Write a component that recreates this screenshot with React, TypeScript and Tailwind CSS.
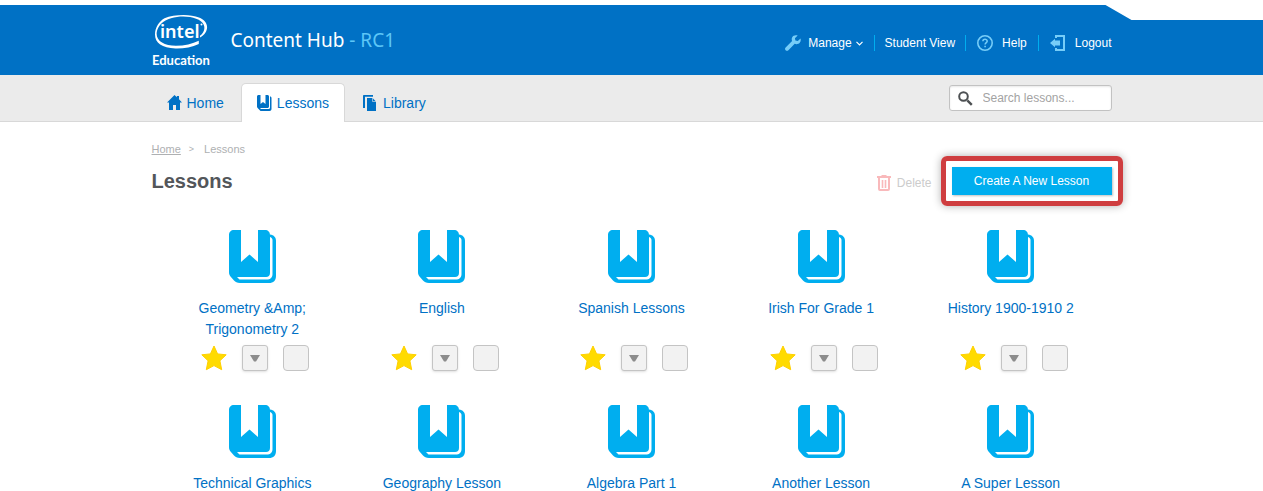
import React from 'react';

const lessons = [
  'Geometry &Amp; Trigonometry 2',
  'English',
  'Spanish Lessons',
  'Irish For Grade 1',
  'History 1900-1910 2',
  'Technical Graphics',
  'Geography Lesson',
  'Algebra Part 1',
  'Another Lesson',
  'A Super Lesson',
];

function IntelLogo() {
  return (
    <svg width="62" height="54" viewBox="0 0 62 54" fill="#fff" aria-label="Intel Education">
      <path d="M12.5 4.2C22 .4 38 -.4 47 3.600C54 6.500 57.300 12 53.500 18.500C52.300 20.500 50.300 22.300 48 23.600V21.800C51.500 19 53.500 14.800 51.700 10.800C48.500 3.200 32 .5 19 4.200C11 6.600 5.500 12 4.700 18.500C3.700 27 12 31.800 24 31.800C32.500 31.800 40.500 29.800 46.800 26.700V30C40 33.200 31.500 34.700 23.500 34.500C10 34.100 3 28.800 3 20.500C3 13.500 7 7.500 12.500 4.200Z" />
      <text x="8" y="24" fontSize="18" fontWeight="600" fontFamily="'Noto Sans', sans-serif">intel</text>
      <circle cx="49.500" cy="10.500" r="1" />
      <text x="0" y="51" fontSize="13" fontWeight="700" fontFamily="Lato, sans-serif">Education</text>
    </svg>
  );
}

function WrenchIcon() {
  return (
    <svg width="16" height="16" viewBox="0 0 16 16" fill="#76cdf8" aria-hidden="true">
      <path d="M12.700 .6C10.500 -.3 8 .5 7.100 2.600C6.500 3.900 6.700 5.100 7.100 6.100L.6 12.400C-.2 13.200 -.2 14.400 .6 15.200C1.400 16 2.600 16 3.400 15.200L9.700 8.800C11.400 9.500 13.500 9.200 14.700 7.700C15.800 6.500 16 4.900 15.500 3.500L12.800 6L10.400 5.500L9.900 3.200Z" />
    </svg>
  );
}

function HelpIcon() {
  return (
    <svg width="16" height="16" viewBox="0 0 16 16" fill="none" stroke="#76cdf8" aria-hidden="true">
      <circle cx="8" cy="8" r="7.200" strokeWidth="1.600" />
      <path d="M5.900 6.200C5.900 3.700 10.200 3.700 10.200 6.200C10.200 7.600 8.100 7.700 8.100 9.600" strokeWidth="1.500" />
      <path d="M8.100 10.700V12.200" strokeWidth="1.600" />
    </svg>
  );
}

function LogoutIcon() {
  return (
    <svg width="16" height="16" viewBox="0 0 16 16" fill="#76cdf8" aria-hidden="true">
      <path d="M5 0H15V16H5V13H7V14H13V2H7V3H5Z" />
      <path d="M0 8L5 3.800V5.500H10V10.500H5V12.200Z" />
    </svg>
  );
}

function HomeIcon() {
  return (
    <svg width="15" height="15" viewBox="0 0 15 15" fill="#0071c5" aria-hidden="true">
      <path d="M7.500 0L9.900 2.300V1H12V4.300L15 7.500H13V15H9V10H6V15H2V7.500H0Z" />
    </svg>
  );
}

function LessonTabIcon() {
  return (
    <svg width="15" height="16" viewBox="0 0 15 16" fill="#0071c5" aria-hidden="true">
      <path d="M1.500 0H3.500V9L6 7L8.500 9V0H10.500C11.300 0 12 .7 12 1.500V11.500C12 12.300 11.300 13 10.500 13H3L4 14H11.500C12.500 14 13 13.400 13 12.500V1.500C14 1.500 14.500 2.200 14.500 3V14C14.500 15.200 13.700 16 12.500 16H3.500L.6 13C.2 12.500 0 12 0 11.500V1.500C0 .7 .7 0 1.500 0Z" />
    </svg>
  );
}

function LibraryIcon() {
  return (
    <svg width="14" height="16" viewBox="0 0 14 16" fill="#0071c5" aria-hidden="true">
      <path d="M0 1C0 .4 .4 0 1 0H10V1.800H2V13H0Z" />
      <path d="M4 3H9.500L13 6.500V16H4Z" />
      <path d="M9.500 3V6.500H13" fill="none" stroke="#ebebeb" strokeWidth=".6" />
    </svg>
  );
}

function BookIcon() {
  return (
    <svg width="47" height="53" viewBox="0 0 47 53" fill="#00aeef" aria-hidden="true">
      <path d="M5 0H12V32L20.500 24.500L29 32V0H36C39 0 41 2 41 5V43C41 45.500 39.500 47 37 47H8L10.500 49.500H37.500C41.500 49.500 43.500 47.500 43.500 44V10C43.500 8.500 42.500 7.500 41 7V4.500C45 5 47 7.500 47 11V46C47 50.500 44.500 53 40 53H11C8 53 6.500 52 5 50.500L1.500 46.500C.5 45.300 0 44 0 42V5C0 2 2 0 5 0Z" />
    </svg>
  );
}

function StarIcon() {
  return (
    <svg width="26" height="26" viewBox="0 0 26 26" aria-hidden="true">
      <path
        d="M13 1L16.600 8.900L25.200 9.800L18.900 15.800L20.700 24.700L13 20.600L5.300 24.700L7.100 15.800L.8 9.800L9.400 8.900Z"
        fill="#ffdb00"
        stroke="#ffd000"
        strokeWidth="1"
        strokeLinejoin="round"
      />
    </svg>
  );
}

function SearchIcon() {
  return (
    <svg width="15" height="15" viewBox="0 0 15 15" fill="none" stroke="#4d5053" className="shrink-0" aria-hidden="true">
      <circle cx="5.500" cy="5.500" r="4.300" strokeWidth="2" />
      <path d="M9.300 9.300L13.800 13.800" strokeWidth="2.400" />
    </svg>
  );
}

function TrashIcon() {
  return (
    <svg width="14" height="16" viewBox="0 0 14 16" fill="none" stroke="#f9b9bb" aria-hidden="true">
      <path d="M0 2H14M4.500 1H9.500" strokeWidth="2" />
      <path d="M2 3V14C2 14.700 2.300 15 3 15H11C11.700 15 12 14.700 12 14V3" strokeWidth="2" />
      <path d="M5.500 5V13M8.500 5V13" strokeWidth="1.600" />
    </svg>
  );
}

function LessonCard({ title }: { title: string }) {
  return (
    <li className="flex h-[175px] flex-col items-center">
      <BookIcon />
      <a href="#lesson" className="mt-[15px] h-[47px] text-center text-sm leading-[21px] text-[#0071c5]">
        {title}
      </a>
      <div className="flex gap-[15px] pl-1.5">
        <button type="button" aria-label={`Favourite ${title}`}>
          <StarIcon />
        </button>
        <button
          type="button"
          aria-label={`Options for ${title}`}
          className="flex size-[26px] items-center justify-center rounded-[3px] border border-[#c4c4c4] bg-[#f2f2f2] shadow-sm"
        >
          <svg width="10" height="7" viewBox="0 0 10 7" fill="#8c8c8c" aria-hidden="true">
            <path d="M0 0H10L6 6.500H4Z" />
          </svg>
        </button>
        <input
          type="checkbox"
          aria-label={`Select ${title}`}
          className="size-[26px] appearance-none rounded-[4px] border border-[#c4c4c4] bg-[#f2f2f2] checked:bg-[#00aeef]"
        />
      </div>
    </li>
  );
}

export default function App() {
  return (
    <div className="bg-white pt-[5px] font-['Liberation_Sans',Arial,sans-serif] text-xs">
      <header className="bg-[#0071c5] [clip-path:polygon(0_0,calc(50%_+_474px)_0,calc(50%_+_500px)_15px,100%_15px,100%_100%,0_100%)]">
        <div className="mx-auto flex h-[70px] max-w-[960px] items-start justify-between">
          <div className="flex">
            <a href="#home" className="pt-[9px]">
              <IntelLogo />
            </a>
            <div className="pt-[21px] pl-[17px] font-['Noto_Sans',sans-serif] text-[19px] leading-7 text-white">
              Content Hub <span className="text-[#5cc6f7]">- RC1</span>
            </div>
          </div>
          <nav aria-label="Account" className="flex items-center pt-[30px] leading-4 text-white">
            <button type="button" className="flex items-center pr-[11px]">
              <WrenchIcon />
              <span className="pr-1 pl-[7px]">Manage</span>
              <svg width="7" height="5" viewBox="0 0 7 5" fill="none" stroke="#fff" aria-hidden="true">
                <path d="M.5 .8L3.500 3.800L6.500 .8" strokeWidth="1.200" />
              </svg>
            </button>
            <a href="#student" className="border-l border-[#00aeef] px-[10px]">
              Student View
            </a>
            <a href="#help" className="flex items-center gap-[9px] border-l border-[#00aeef] px-[11px]">
              <HelpIcon />
              Help
            </a>
            <a href="#logout" className="flex items-center gap-[9px] border-l border-[#00aeef] pl-[11px]">
              <LogoutIcon />
              Logout
            </a>
          </nav>
        </div>
      </header>

      <div className="border-b border-[#d8d8d8] bg-[#ebebeb]">
        <div className="mx-auto flex h-[46px] max-w-[960px] items-start justify-between">
          <nav aria-label="Main" className="flex pt-2 text-sm text-[#0071c5]">
            <a href="#home" className="flex h-[39px] items-center gap-[5px] px-[15px]">
              <HomeIcon />
              Home
            </a>
            <a
              href="#lessons"
              aria-current="page"
              className="mx-0.5 flex h-[39px] items-center gap-[5px] rounded-t-[5px] border border-b-0 border-[#d8d8d8] bg-white px-[15px]"
            >
              <LessonTabIcon />
              Lessons
            </a>
            <a href="#library" className="flex h-[39px] items-center gap-[6px] px-4">
              <LibraryIcon />
              Library
            </a>
          </nav>
          <label className="mt-[10px] flex h-[26px] w-[163px] items-center gap-[10px] rounded-[3px] border border-[#c2c2c2] bg-white pl-2 shadow-[inset_0_1px_2px_#00000018]">
            <SearchIcon />
            <input
              type="search"
              aria-label="Search lessons"
              placeholder="Search lessons..."
              className="w-full min-w-0 bg-transparent outline-none placeholder:text-[#a3a3a3]"
            />
          </label>
        </div>
      </div>

      <main className="mx-auto max-w-[960px]">
        <nav aria-label="Breadcrumb" className="flex gap-2 pt-[19px] text-[11px] leading-4 text-[#aeb0b2]">
          <a href="#home" className="underline">
            Home
          </a>
          <span className="pr-0.5 text-[9px]">&gt;</span>
          <span>Lessons</span>
        </nav>

        <div className="flex items-start justify-between pt-[10px]">
          <h1 className="text-xl leading-7 font-bold text-[#53565a]">Lessons</h1>
          <div className="flex items-center gap-5">
            <button type="button" disabled className="flex items-center gap-[6px] pt-[3px] text-[#cccccc]">
              <TrashIcon />
              Delete
            </button>
            <div className="relative">
              <button type="button" className="h-7 w-40 bg-[#00aeef] text-white shadow-[1px_1px_2px_#00000040]">
                Create A New Lesson
              </button>
              <div className="pointer-events-none absolute -inset-[11px] rounded-[6px] border-[5px] border-[#cf3e40] shadow-[0_0_8px_#00000050]" />
            </div>
          </div>
        </div>

        <ul className="grid grid-cols-5 px-1.5 pt-[35px]">
          {lessons.map((title) => (
            <LessonCard key={title} title={title} />
          ))}
        </ul>
      </main>
    </div>
  );
}
